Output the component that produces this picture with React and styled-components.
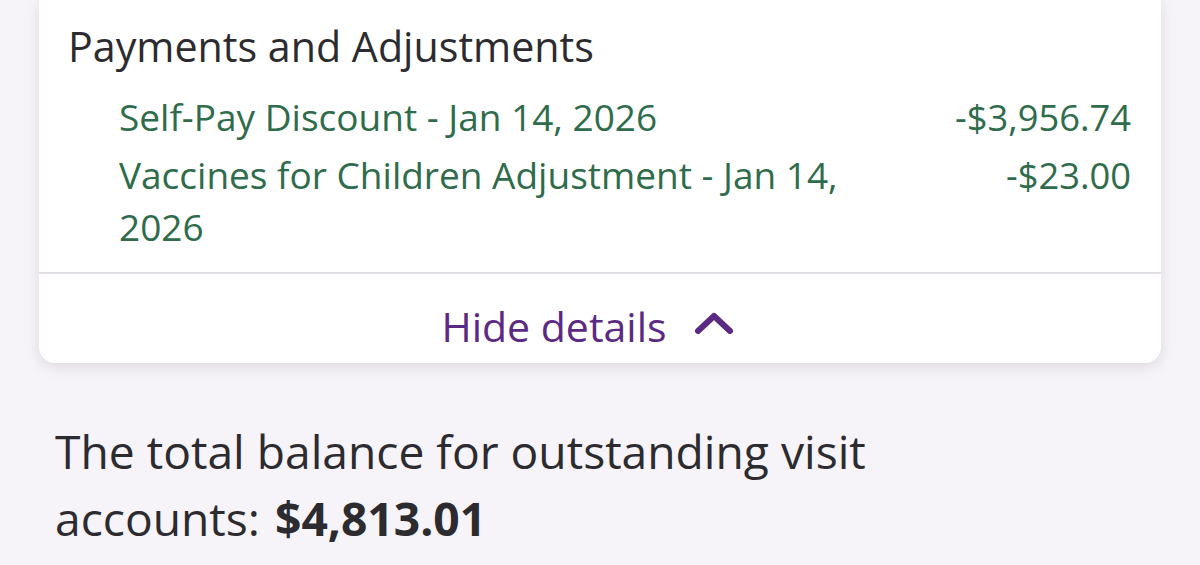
import React from 'react'
import styled, { createGlobalStyle } from 'styled-components'

const GlobalStyle = createGlobalStyle`
  html, body {
    margin: 0;
    padding: 0;
    background: #f6f4f8;
  }
  body {
    font-family: 'Open Sans', 'Noto Sans', sans-serif;
  }
`

const adjustments = [
  { label: 'Self-Pay Discount - Jan 14, 2026', amount: '-$3,956.74' },
  { label: 'Vaccines for Children Adjustment - Jan 14, 2026', amount: '-$23.00' },
]

export default function App() {
  return (
    <Page>
      <GlobalStyle />
      <Card>
        <Section>
          <Heading>Payments and Adjustments</Heading>
          <List>
            {adjustments.map((a) => (
              <Row key={a.label}>
                <Label>{a.label}</Label>
                <Amount>{a.amount}</Amount>
              </Row>
            ))}
          </List>
        </Section>
        <Toggle>
          <span>Hide details</span>
          <svg width="42" height="24" viewBox="0 0 42 24" fill="none">
            <path
              d="M5 19 L21 4 L37 19"
              stroke="#5b2a84"
              strokeWidth="6"
              strokeLinecap="round"
              strokeLinejoin="round"
            />
          </svg>
        </Toggle>
      </Card>
      <Total>
        The total balance for outstanding visit accounts: <strong>$4,813.01</strong>
      </Total>
    </Page>
  )
}

const Page = styled.div`
  width: 1200px;
  height: 565px;
  overflow: hidden;
  padding: 0 39px;
  box-sizing: border-box;
  background: #f6f4f8;
`

const Card = styled.div`
  background: #ffffff;
  border-radius: 0 0 16px 16px;
  box-shadow: 0 4px 14px rgba(40, 20, 60, 0.12);
`

const Section = styled.div`
  padding: 21px 30px 19px 29px;
`

const Heading = styled.div`
  font-size: 41.2px;
  line-height: 50px;
  color: #2c2b2f;
`

const List = styled.div`
  display: flex;
  flex-direction: column;
  gap: 6px;
  padding-left: 51px;
  margin-top: 20px;
`

const Row = styled.div`
  display: flex;
  justify-content: space-between;
  align-items: flex-start;
  color: #2f6c4b;
  font-size: 37px;
  line-height: 52px;
`

const Label = styled.div`
  max-width: 750px;
`

const Amount = styled.div`
  text-align: right;
  font-size: 36.3px;
`

const Toggle = styled.div`
  height: 91px;
  box-sizing: border-box;
  padding: 14px 24px 0 0;
  border-top: 2px solid #e0dee3;
  display: flex;
  align-items: center;
  justify-content: center;
  gap: 26px;
  color: #5b2a84;
  font-size: 41px;
  svg {
    margin-top: -3px;
  }
`

const Total = styled.div`
  margin-top: 55px;
  padding-left: 16px;
  max-width: 860px;
  font-size: 46.2px;
  line-height: 67px;
  color: #2c2b2f;
  strong {
    font-weight: 700;
    margin-left: 3px;
  }
`
